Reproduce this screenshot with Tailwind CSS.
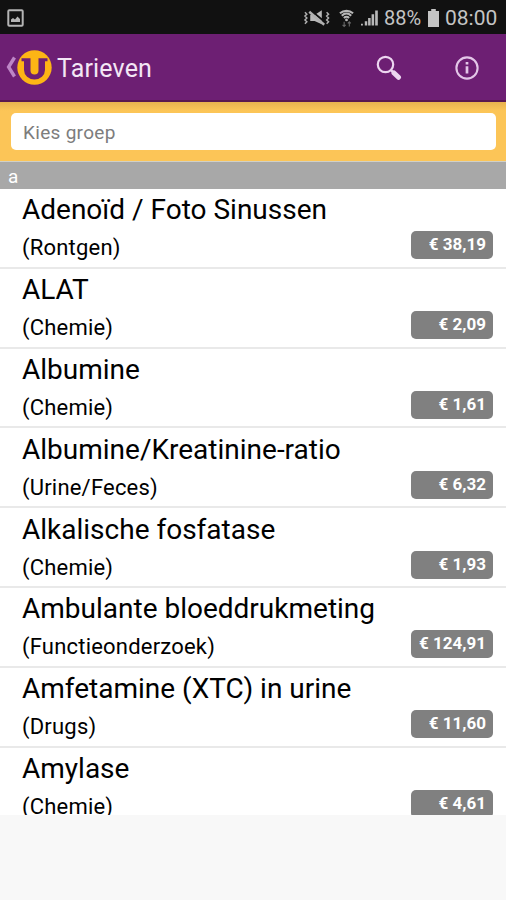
<!DOCTYPE html>
<html lang="nl">
  <head>
    <meta charset="UTF-8" />
    <meta name="viewport" content="width=device-width, initial-scale=1.0" />
    <title>Tarieven</title>
    <script src="https://cdn.jsdelivr.net/npm/@tailwindcss/browser@4"></script>
    <style>
      body {
        font-family: Roboto, 'Liberation Sans', sans-serif;
      }
    </style>
  </head>
  <body class="bg-[#f8f8f8] w-[506px] h-[900px] overflow-hidden">
    <!-- Status bar -->
    <div class="h-[34px] bg-[#111111] flex items-center justify-between pl-[7px] pr-[8px] pt-[2px] text-[#c4c4c4]">
      <svg class="w-[17px] h-[18px]" viewBox="0 0 17 18" fill="none">
        <rect x="1.3" y="1.3" width="14.4" height="15.4" rx="1" stroke="#b4b4b4" stroke-width="2" />
        <path d="M4 13V10.500L6 9l2 1.500L10.500 7.500 13 10v3z" fill="#b4b4b4" />
      </svg>
      <div class="flex items-center">
        <svg class="w-[27px] h-[18px]" viewBox="0 0 28 18" fill="none" stroke="#b0b0b0">
          <path d="M2 3l2 2-2 2 2 2-2 2 2 2-2 2M24.500 3l2 2-2 2 2 2-2 2 2 2-2 2" stroke-width="1.500" />
          <path d="M7.500 6h4.500l7.500-5v14.500L12 12H7.500z" fill="#b8b8b8" stroke="none" />
          <path d="M8.500 1.500L23 13.500" stroke="#111111" stroke-width="2" />
          <path d="M6.500 2.500L22 16" stroke-width="2.500" />
        </svg>
        <svg class="w-[15px] h-[19px] ml-[9px]" viewBox="0 0 16 19" fill="none" stroke="#b8b8b8">
          <path d="M1 4C5 .5 11 .5 15 4M3 6.500c3-3 7-3 10 0M5.200 9c1.700-1.700 3.900-1.700 5.600 0" stroke-width="2.200" />
          <circle cx="8" cy="11" r="1.500" fill="#b8b8b8" stroke="none" />
          <path d="M5.500 13v5M3.800 16.200l1.700 1.800 1.600-1.800M11 18v-5M9.400 14.800L11 13l1.600 1.800" stroke="#666666" stroke-width="1.200" />
        </svg>
        <svg class="w-[17px] h-[18px] ml-[7px]" viewBox="0 0 18 18" fill="#b8b8b8">
          <path d="M0 15h2v2H0zM4 12.500h2.600V17H4zM7.500 9h2.700v8H7.500zM11.200 5h2.700v12h-2.700zM15 1h2.800v16H15z" />
        </svg>
        <span class="ml-[6px] text-[20px] leading-[20px] w-[41px] whitespace-nowrap">88%</span>
        <svg class="w-[11px] h-[18px] ml-[3px]" viewBox="0 0 12 18" preserveAspectRatio="none" fill="#c4c4c4">
          <path d="M3.500 0h5v2H12v16H0V2h3.500z" />
        </svg>
        <span class="ml-[6px] text-[21px] leading-[20px] w-[53px] whitespace-nowrap">08:00</span>
      </div>
    </div>

    <!-- Action bar -->
    <header class="h-[68px] bg-[#6d1f73] border-b-2 border-[#5a1750] flex items-center">
      <svg class="w-[10px] h-[22px] ml-[6px]" viewBox="0 0 10 22" fill="none" stroke="#bd85c6" stroke-width="3.400">
        <path d="M8.500 1.500L2.600 11 8.500 20.500" />
      </svg>
      <svg class="w-[35px] h-[35px] ml-[1px] mt-px" viewBox="0 0 35 35">
        <circle cx="17.500" cy="17.500" r="17.200" fill="#fdb515" />
        <path d="M4.500 8.300h9v12.200a4 4 0 0 0 8 0V8.300h9v3h-2.500v8.700a10.500 9.500 0 0 1-21 0v-8.700H4.500z" fill="#6d1f73" />
      </svg>
      <h1 class="ml-[5px] text-[25px] leading-[30px] pt-[4px] tracking-[0.15px] text-[#f3e6f5] whitespace-nowrap">Tarieven</h1>
      <svg class="w-[26px] h-[26px] ml-auto mr-[53px] mt-[2px]" viewBox="0 0 26 26" fill="none" stroke="#ecd6f0">
        <circle cx="9.500" cy="9.500" r="7.700" stroke-width="2.200" />
        <path d="M14.800 14.800l3 3" stroke-width="2.500" />
        <path d="M18 18l4.500 4.300" stroke-width="5" stroke-linecap="round" />
      </svg>
      <svg class="w-[24px] h-[24px] mr-[27px] mt-[2px]" viewBox="0 0 24 24" fill="none" stroke="#e3c6e8">
        <circle cx="12" cy="12" r="10.600" stroke-width="2.100" />
        <path d="M12 10.200v7.300M12 6v2.600" stroke-width="2.700" />
      </svg>
    </header>

    <!-- Group filter -->
    <div class="h-[59px] bg-[#fcc557] bg-linear-to-b from-[#e8b24f] from-0% to-[#fcc557] to-15% pt-[11px] px-[11px]">
      <input type="text" placeholder="Kies groep" class="block w-[485px] h-[37px] rounded-[5px] bg-white pl-[12px] pt-[2px] text-[19px] tracking-[0.3px] placeholder:text-[#7d7d7d] placeholder:opacity-100 focus:outline-none" />
    </div>
    <div class="h-[28px] bg-[#a8a8a8] border-t border-[#d0d0c8] pl-[8px] text-[19px] leading-[29px] text-white">a</div>

    <!-- Price list -->
    <ul class="h-[626px] overflow-hidden bg-white text-black">
      <li class="h-[79.8px] border-b-2 border-[#e9e9e9] pl-[22px] pr-[13px] pt-[4.4px]">
        <h2 class="text-[28px] leading-[33px] whitespace-nowrap">Adenoïd / Foto Sinussen</h2>
        <div class="flex justify-between items-start pt-[5px]">
          <p class="text-[22px] leading-[26px] pt-[4px] tracking-[0.2px]">(Rontgen)</p>
          <span class="w-[82px] h-[28px] rounded-[5px] bg-[#808080] text-white font-bold text-[17px] leading-[27px] text-right pr-[7px] whitespace-nowrap">€ 38,19</span>
        </div>
      </li>
      <li class="h-[79.8px] border-b-2 border-[#e9e9e9] pl-[22px] pr-[13px] pt-[4.4px]">
        <h2 class="text-[28px] leading-[33px] whitespace-nowrap">ALAT</h2>
        <div class="flex justify-between items-start pt-[5px]">
          <p class="text-[22px] leading-[26px] pt-[4px] tracking-[0.2px]">(Chemie)</p>
          <span class="w-[82px] h-[28px] rounded-[5px] bg-[#808080] text-white font-bold text-[17px] leading-[27px] text-right pr-[7px] whitespace-nowrap">€ 2,09</span>
        </div>
      </li>
      <li class="h-[79.8px] border-b-2 border-[#e9e9e9] pl-[22px] pr-[13px] pt-[4.4px]">
        <h2 class="text-[28px] leading-[33px] whitespace-nowrap">Albumine</h2>
        <div class="flex justify-between items-start pt-[5px]">
          <p class="text-[22px] leading-[26px] pt-[4px] tracking-[0.2px]">(Chemie)</p>
          <span class="w-[82px] h-[28px] rounded-[5px] bg-[#808080] text-white font-bold text-[17px] leading-[27px] text-right pr-[7px] whitespace-nowrap">€ 1,61</span>
        </div>
      </li>
      <li class="h-[79.8px] border-b-2 border-[#e9e9e9] pl-[22px] pr-[13px] pt-[4.4px]">
        <h2 class="text-[28px] leading-[33px] whitespace-nowrap">Albumine/Kreatinine-ratio</h2>
        <div class="flex justify-between items-start pt-[5px]">
          <p class="text-[22px] leading-[26px] pt-[4px] tracking-[0.2px]">(Urine/Feces)</p>
          <span class="w-[82px] h-[28px] rounded-[5px] bg-[#808080] text-white font-bold text-[17px] leading-[27px] text-right pr-[7px] whitespace-nowrap">€ 6,32</span>
        </div>
      </li>
      <li class="h-[79.8px] border-b-2 border-[#e9e9e9] pl-[22px] pr-[13px] pt-[4.4px]">
        <h2 class="text-[28px] leading-[33px] whitespace-nowrap">Alkalische fosfatase</h2>
        <div class="flex justify-between items-start pt-[5px]">
          <p class="text-[22px] leading-[26px] pt-[4px] tracking-[0.2px]">(Chemie)</p>
          <span class="w-[82px] h-[28px] rounded-[5px] bg-[#808080] text-white font-bold text-[17px] leading-[27px] text-right pr-[7px] whitespace-nowrap">€ 1,93</span>
        </div>
      </li>
      <li class="h-[79.8px] border-b-2 border-[#e9e9e9] pl-[22px] pr-[13px] pt-[4.4px]">
        <h2 class="text-[28px] leading-[33px] whitespace-nowrap">Ambulante bloeddrukmeting</h2>
        <div class="flex justify-between items-start pt-[5px]">
          <p class="text-[22px] leading-[26px] pt-[4px] tracking-[0.2px]">(Functieonderzoek)</p>
          <span class="w-[82px] h-[28px] rounded-[5px] bg-[#808080] text-white font-bold text-[17px] leading-[27px] text-right pr-[7px] whitespace-nowrap">€ 124,91</span>
        </div>
      </li>
      <li class="h-[79.8px] border-b-2 border-[#e9e9e9] pl-[22px] pr-[13px] pt-[4.4px]">
        <h2 class="text-[28px] leading-[33px] whitespace-nowrap">Amfetamine (XTC) in urine</h2>
        <div class="flex justify-between items-start pt-[5px]">
          <p class="text-[22px] leading-[26px] pt-[4px] tracking-[0.2px]">(Drugs)</p>
          <span class="w-[82px] h-[28px] rounded-[5px] bg-[#808080] text-white font-bold text-[17px] leading-[27px] text-right pr-[7px] whitespace-nowrap">€ 11,60</span>
        </div>
      </li>
      <li class="h-[79.8px] border-b-2 border-[#e9e9e9] pl-[22px] pr-[13px] pt-[4.4px]">
        <h2 class="text-[28px] leading-[33px] whitespace-nowrap">Amylase</h2>
        <div class="flex justify-between items-start pt-[5px]">
          <p class="text-[22px] leading-[26px] pt-[4px] tracking-[0.2px]">(Chemie)</p>
          <span class="w-[82px] h-[28px] rounded-[5px] bg-[#808080] text-white font-bold text-[17px] leading-[27px] text-right pr-[7px] whitespace-nowrap">€ 4,61</span>
        </div>
      </li>
    </ul>
  </body>
</html>
